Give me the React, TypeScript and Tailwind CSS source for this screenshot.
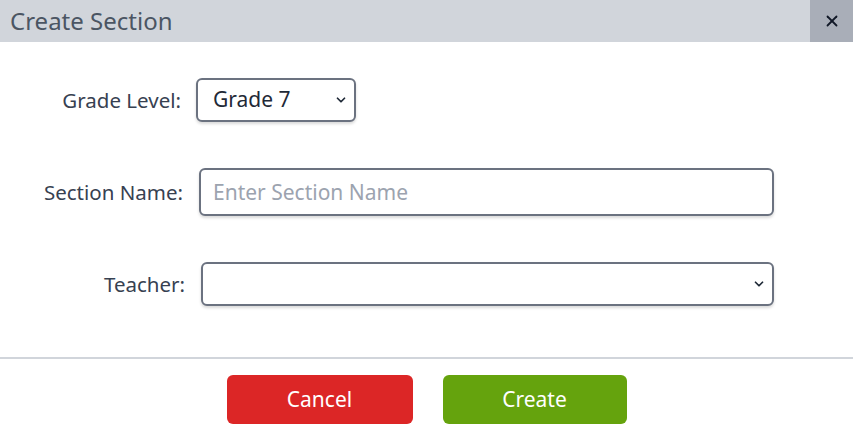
import { ChevronDown, X } from "lucide-react";

const font = { fontFamily: '"Noto Sans", "Open Sans", sans-serif' };

const Row = ({
  label,
  labelWidth,
  gap,
  children,
}: {
  label: string;
  labelWidth: string;
  gap: string;
  children: React.ReactNode;
}) => (
  <div className={`flex items-center ${gap}`}>
    <label className={`${labelWidth} shrink-0 text-right text-[20.5px] text-[#374151]`}>
      {label}
    </label>
    {children}
  </div>
);

export default function App() {
  return (
    <div className="w-[853px] h-[439px] bg-white flex flex-col overflow-hidden" style={font}>
      {/* Header */}
      <div className="h-[42px] flex items-stretch bg-[#d1d5db]">
        <h1 className="flex-1 pl-[10px] flex items-center text-[24px] text-[#4b5563]">
          Create Section
        </h1>
        <button className="w-[43px] flex items-center justify-center bg-[#a9aeb8]">
          <X className="w-[18px] h-[18px] text-[#111827]" strokeWidth={2.4} />
        </button>
      </div>

      {/* Body */}
      <div className="flex flex-col pt-[36px] gap-[46px] h-[315px]">
        <Row label="Grade Level:" labelWidth="w-[181px]" gap="gap-[15px]">
          <div className="relative w-[160px] h-[44px]">
            <select
              defaultValue="7"
              className="w-full h-full appearance-none rounded-md border-2 border-[#6b7280] bg-white pl-[15px] text-[21px] text-[#1f2937] shadow-[0_2px_3px_rgba(0,0,0,0.15)] outline-none"
            >
              <option value="7">Grade 7</option>
            </select>
            <ChevronDown
              className="absolute right-[8px] top-[15px] w-[14px] h-[14px] text-[#1f2937] pointer-events-none"
              strokeWidth={3}
            />
          </div>
        </Row>

        <Row label="Section Name:" labelWidth="w-[183px]" gap="gap-[16px]">
          <input
            placeholder="Enter Section Name"
            className="w-[575px] h-[48px] rounded-md border-2 border-[#6b7280] bg-white px-[12px] text-[21px] text-[#1f2937] placeholder:text-[#9ca3af] shadow-[0_2px_3px_rgba(0,0,0,0.15)] outline-none"
          />
        </Row>

        <Row label="Teacher:" labelWidth="w-[185px]" gap="gap-[16px]">
          <div className="relative w-[573px] h-[44px]">
            <select className="w-full h-full appearance-none rounded-md border-2 border-[#6b7280] bg-white px-[12px] text-[21px] shadow-[0_2px_3px_rgba(0,0,0,0.15)] outline-none">
              <option value=""></option>
            </select>
            <ChevronDown
              className="absolute right-[8px] top-[15px] w-[14px] h-[14px] text-[#1f2937] pointer-events-none"
              strokeWidth={3}
            />
          </div>
        </Row>
      </div>

      {/* Footer */}
      <div className="border-t-2 border-[#d1d5db] flex justify-center gap-[30px] pt-[16px]">
        <button className="w-[186px] h-[49px] rounded-md bg-[#dc2626] text-white text-[21px]">
          Cancel
        </button>
        <button className="w-[184px] h-[49px] rounded-md bg-[#65a30d] text-white text-[21px]">
          Create
        </button>
      </div>
    </div>
  );
}
